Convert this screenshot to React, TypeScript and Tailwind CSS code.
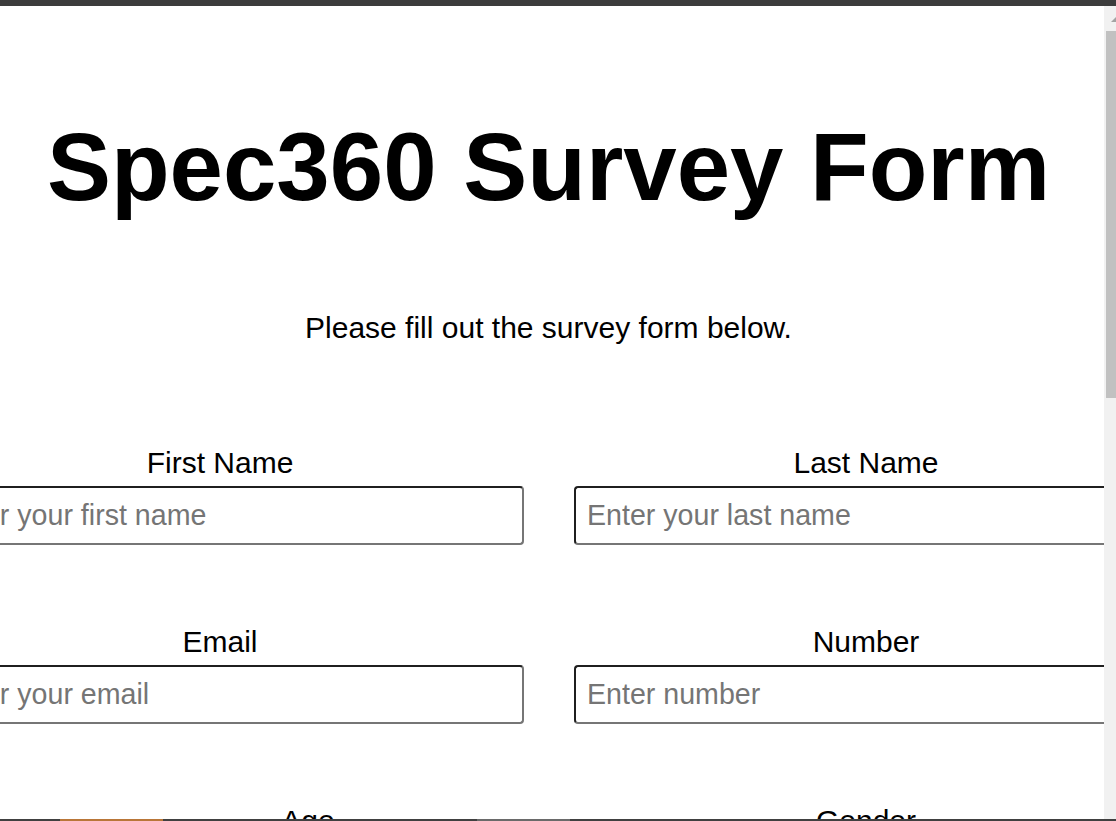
import React from 'react';

const fields = [
  { id: 'first-name', label: 'First Name', placeholder: 'Enter your first name', type: 'text' },
  { id: 'last-name', label: 'Last Name', placeholder: 'Enter your last name', type: 'text' },
  { id: 'email', label: 'Email', placeholder: 'Enter your email', type: 'email' },
  { id: 'number', label: 'Number', placeholder: 'Enter number', type: 'tel' },
];

const inputClass =
  'w-[596px] h-[59px] pl-[11px] pr-[11px] rounded-[4px] border-2 border-t-[#1f1f1f] border-l-[#1f1f1f] border-r-[#767676] border-b-[#767676] bg-white text-[28.6px] text-black placeholder:text-[#757575] outline-none';

const Field = ({ id, label, placeholder, type }: { id: string; label: string; placeholder: string; type: string }) => (
  <div className="flex flex-col">
    <label htmlFor={id} className="text-center text-[30px] leading-[36px] text-black mb-[5px]">
      {label}
    </label>
    <input id={id} type={type} placeholder={placeholder} className={inputClass} />
  </div>
);

export default function App() {
  return (
    <div
      className="relative h-[821px] w-full overflow-hidden flex flex-col bg-white"
      style={{ fontFamily: '"Liberation Sans", Arial, sans-serif' }}
    >
      <div className="h-[6px] shrink-0 bg-[#3c3c3c]" />

      <div className="flex-1 flex min-h-0">
        <main className="w-[1104px] shrink-0 overflow-hidden">
          <div className="pr-[7px] pt-[106px]">
            <h1 className="text-center text-[96px] leading-[110px] font-bold text-black">Spec360 Survey Form</h1>
            <p className="mt-[88px] text-center text-[30px] leading-[36px] text-black">
              Please fill out the survey form below.
            </p>

            <form className="mt-[99px] -ml-[72px] w-[1230px] grid grid-cols-[584px_584px] gap-x-[62px] gap-y-[79px]">
              {fields.map((f) => (
                <Field key={f.id} {...f} />
              ))}
              <div className="flex flex-col">
                <label htmlFor="age" className="ml-[176px] text-center text-[30px] leading-[36px] text-black mb-[5px]">
                  Age
                </label>
                <input id="age" type="number" className={inputClass} />
              </div>
              <div className="flex flex-col">
                <label htmlFor="gender" className="text-center text-[30px] leading-[36px] text-black mb-[5px]">
                  Gender
                </label>
                <select id="gender" className={inputClass} />
              </div>
            </form>
          </div>
        </main>

        {/* scrollbar */}
        <div className="w-[12px] shrink-0 bg-[#f1f1f1] flex flex-col">
          <svg width="12" height="25" viewBox="0 0 12 25" className="block shrink-0">
            <polygon points="12,11 17,16 7,16" fill="#a3a3a3" />
          </svg>
          <div className="ml-[2px] h-[367px] bg-[#c1c1c1]" />
        </div>
      </div>

      <div className="absolute bottom-0 left-0 w-full h-[2px] bg-[#404040] flex pl-[60px]">
        <div className="w-[103px] h-full bg-[#b97638]" />
        <div className="ml-[314px] w-[93px] h-full bg-[#6a6a6a]" />
      </div>
    </div>
  );
}
